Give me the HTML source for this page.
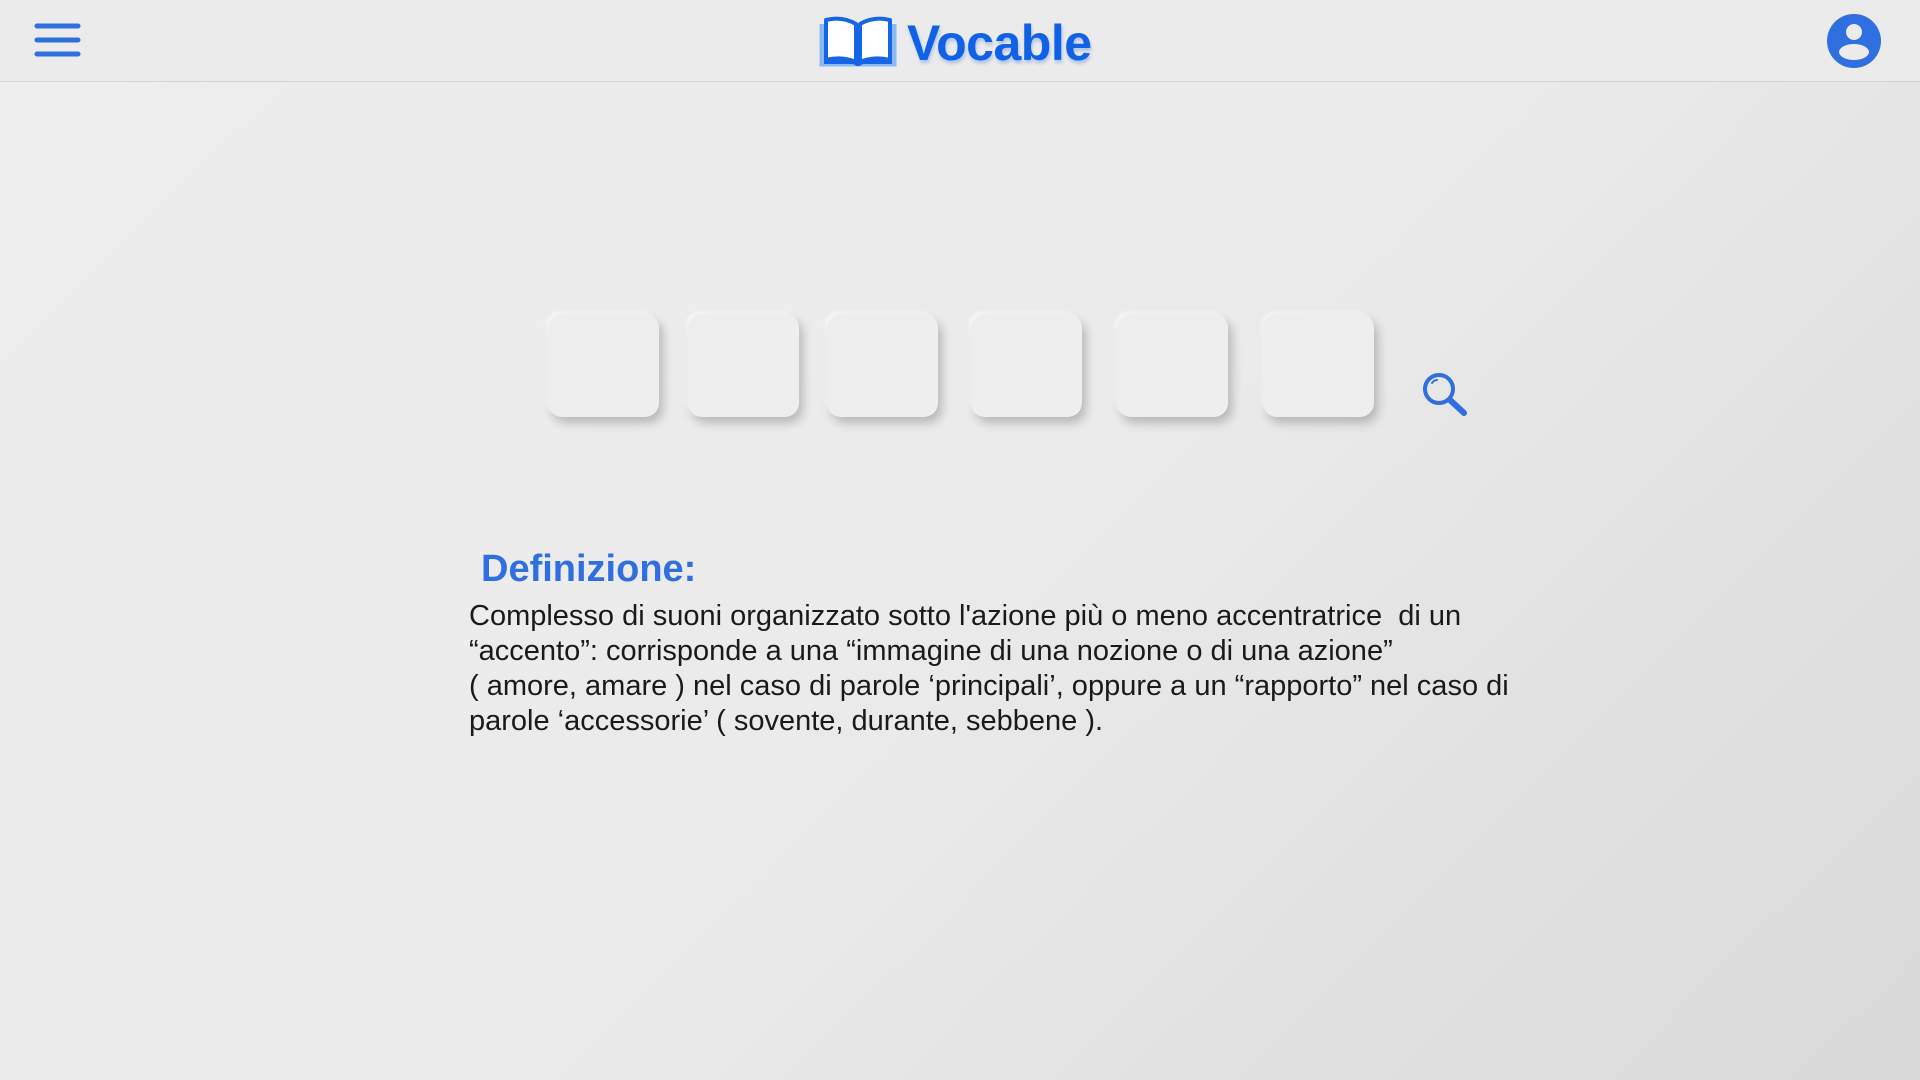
<!DOCTYPE html>
<html><head><meta charset="utf-8"><style>
body{margin:0;width:1920px;height:1080px;overflow:hidden;background:linear-gradient(135deg,#ededed 0%,#ebebeb 50%,#d9d9d9 100%);font-family:"Liberation Sans",sans-serif;position:relative}
.hdr{position:absolute;left:0;top:0;width:1920px;height:81px;background:#ebebeb;border-bottom:1px solid #d3d3d3}
.tile{position:absolute;top:314px;width:111px;height:103px;border-radius:14px;background:#eeeeee;box-shadow:4px 6px 10px rgba(0,0,0,.22),-2px -2px 4px rgba(255,255,255,.7)}
.def{position:absolute;left:481px;top:548px;font-size:38px;font-weight:bold;color:#2f6fe0}
.txt{position:absolute;left:469px;top:599px;font-size:29px;line-height:35px;color:#1a1a1a;white-space:nowrap}
</style></head><body>
<div class="hdr"></div>
<svg style="position:absolute;left:34px;top:23px" width="47" height="34"><g stroke="#2f6fe0" stroke-width="5" stroke-linecap="round"><line x1="3" y1="3" x2="44" y2="3"/><line x1="3" y1="17" x2="44" y2="17"/><line x1="3" y1="31" x2="44" y2="31"/></g></svg>
<svg style="position:absolute;left:818px;top:14px" width="80" height="56"><path d="M4 10 V50 H76 V10" fill="none" stroke="#4a9af5" stroke-width="5" opacity=".6"/><path d="M8 6 Q24 2 38 10 V48 Q24 42 8 46Z M72 6 Q56 2 42 10 V48 Q56 42 72 46Z" fill="#fff" stroke="#1565e6" stroke-width="4" stroke-linejoin="round"/><path d="M6 48 H36 Q40 52 44 48 H74" fill="none" stroke="#1565e6" stroke-width="4"/></svg>
<div style="position:absolute;left:907px;top:14px;font-size:50px;font-weight:bold;color:#1061e6;letter-spacing:-0.5px;text-shadow:1px 3px 3px rgba(30,100,230,.3)">Vocable</div>
<svg style="position:absolute;left:1826px;top:13px" width="56" height="56"><circle cx="28" cy="28" r="27" fill="#2f6fe0"/><circle cx="28" cy="19" r="8" fill="#ebebeb"/><ellipse cx="28" cy="39" rx="15" ry="8" fill="#ebebeb"/></svg>
<div class="tile" style="left:548px"></div>
<div class="tile" style="left:688px"></div>
<div class="tile" style="left:827px"></div>
<div class="tile" style="left:971px"></div>
<div class="tile" style="left:1117px"></div>
<div class="tile" style="left:1263px"></div>
<svg style="position:absolute;left:1419px;top:371px" width="54" height="50"><circle cx="20" cy="18" r="14" fill="none" stroke="#2f6fe0" stroke-width="4"/><path d="M13 12 Q15 9 18 9" fill="none" stroke="#2f6fe0" stroke-width="2" stroke-linecap="round"/><line x1="31" y1="29" x2="45" y2="42" stroke="#2f6fe0" stroke-width="6" stroke-linecap="round"/></svg>
<div class="def">Definizione:</div>
<div class="txt">Complesso di suoni organizzato sotto l'azione più o meno accentratrice&nbsp; di un<br>“accento”: corrisponde a una “immagine di una nozione o di una azione”<br>( amore, amare ) nel caso di parole ‘principali’, oppure a un “rapporto” nel caso di<br>parole ‘accessorie’ ( sovente, durante, sebbene ).</div>
</body></html>
